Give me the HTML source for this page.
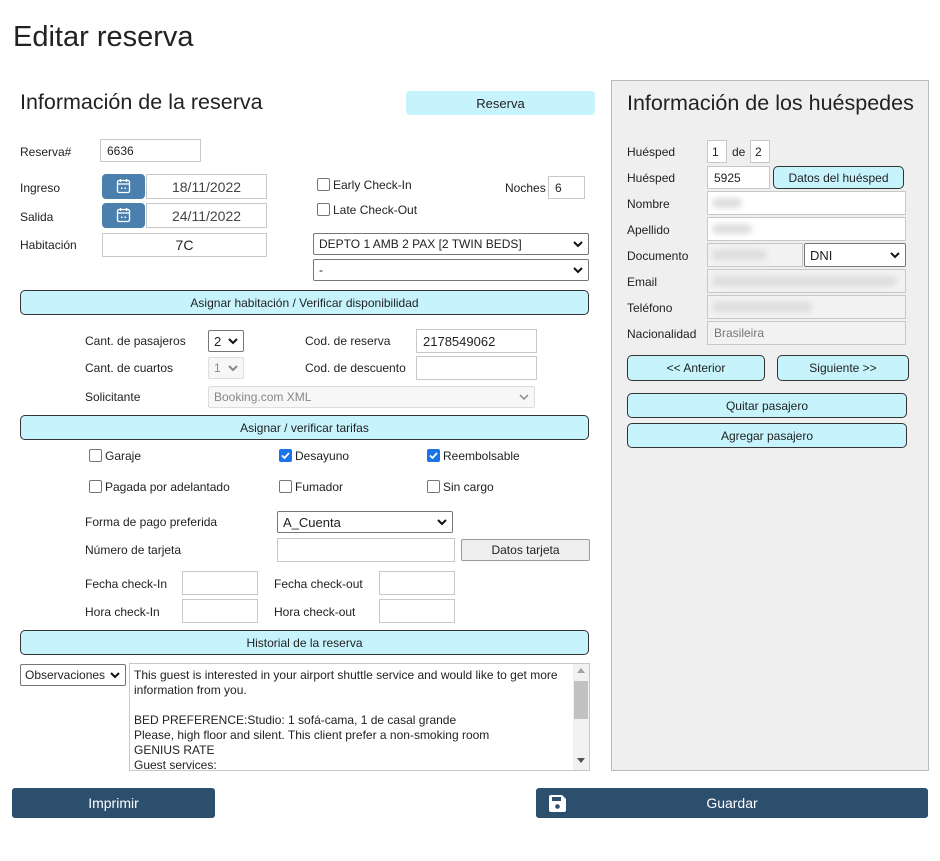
<!DOCTYPE html>
<html><head><meta charset="utf-8">
<style>
*{box-sizing:border-box;margin:0;padding:0}
body{width:940px;height:861px;background:#fff;font-family:"Liberation Sans",Arial,sans-serif;font-size:12px;color:#222;position:relative;overflow:hidden}
.a{position:absolute}
.lbl{position:absolute;font-size:12px;color:#222}
.inp{position:absolute;border:1px solid #c8c8c8;background:#fff;font-size:12px;padding:0 6px;display:flex;align-items:center}
.dis{background:#f2f2f2;color:#777}
.sel{position:absolute;border:1px solid #777;border-radius:2px;background:#fff;font-size:12px;padding:0 5px;display:flex;align-items:center}
.sel svg{position:absolute;right:5px;top:50%;margin-top:-4px}
.bar{position:absolute;background:#c6f3fc;border:1px solid #333;border-radius:5px;font-size:12px;display:flex;align-items:center;justify-content:center;color:#222}
.cb{position:absolute;width:13px;height:13px;border:1px solid #767676;border-radius:2px;background:#fff}
.cbk{position:absolute;width:13px;height:13px;border-radius:2px;background:#1a73e8}
.dark{position:absolute;background:#2c4f6e;color:#fff;border-radius:3px;font-size:14px;display:flex;align-items:center;justify-content:center}
.cal{position:absolute;width:43px;height:25px;background:#4a7fae;border-radius:4px}
.blur{position:absolute;height:10px;background:#ddd;border-radius:5px;filter:blur(3px)}
</style></head><body>
<div class="a" style="left:13px;top:21px;font-size:29px;color:#222">Editar reserva</div>

<div class="a" style="left:20px;top:90px;font-size:21.5px;color:#222">Información de la reserva</div>
<div class="a" style="left:406px;top:91px;width:189px;height:24px;background:#c6f3fc;border-radius:4px;display:flex;align-items:center;justify-content:center;font-size:13px">Reserva</div>

<div class="lbl" style="left:20px;top:145px">Reserva#</div>
<div class="inp" style="left:100px;top:139px;width:101px;height:23px">6636</div>

<div class="lbl" style="left:20px;top:181px">Ingreso</div>
<div class="cal" style="left:102px;top:174px"><svg width="43" height="25"><rect x="15.5" y="6.5" width="12" height="12" rx="1.5" fill="none" stroke="#fff" stroke-width="1.3"/><line x1="15.5" y1="10" x2="27.5" y2="10" stroke="#fff" stroke-width="1.3"/><line x1="18.5" y1="5" x2="18.5" y2="8" stroke="#fff" stroke-width="1.3"/><line x1="24.5" y1="5" x2="24.5" y2="8" stroke="#fff" stroke-width="1.3"/><rect x="19" y="13.5" width="1.5" height="1.5" fill="#fff"/><rect x="22.5" y="13.5" width="1.5" height="1.5" fill="#fff"/></svg></div>
<div class="inp" style="left:146px;top:174px;width:121px;height:25px;justify-content:center;font-size:14px;color:#444">18/11/2022</div>
<div class="lbl" style="left:20px;top:210px">Salida</div>
<div class="cal" style="left:102px;top:203px"><svg width="43" height="25"><rect x="15.5" y="6.5" width="12" height="12" rx="1.5" fill="none" stroke="#fff" stroke-width="1.3"/><line x1="15.5" y1="10" x2="27.5" y2="10" stroke="#fff" stroke-width="1.3"/><line x1="18.5" y1="5" x2="18.5" y2="8" stroke="#fff" stroke-width="1.3"/><line x1="24.5" y1="5" x2="24.5" y2="8" stroke="#fff" stroke-width="1.3"/><rect x="19" y="13.5" width="1.5" height="1.5" fill="#fff"/><rect x="22.5" y="13.5" width="1.5" height="1.5" fill="#fff"/></svg></div>
<div class="inp" style="left:146px;top:203px;width:121px;height:25px;justify-content:center;font-size:14px;color:#444">24/11/2022</div>
<div class="lbl" style="left:20px;top:238px">Habitación</div>
<div class="inp" style="left:102px;top:233px;width:165px;height:24px;justify-content:center;font-size:14px">7C</div>

<div class="cb" style="left:317px;top:178px"></div><div class="lbl" style="left:333px;top:178px">Early Check-In</div>
<div class="cb" style="left:317px;top:203px"></div><div class="lbl" style="left:333px;top:203px">Late Check-Out</div>
<div class="lbl" style="left:505px;top:181px">Noches</div>
<div class="inp" style="left:548px;top:176px;width:37px;height:23px">6</div>

<div class="sel" style="left:313px;top:233px;width:276px;height:22px">DEPTO 1 AMB 2 PAX [2 TWIN BEDS]<svg width="10" height="8"><path d="M1 2l4 4 4-4" fill="none" stroke="#111" stroke-width="2"/></svg></div>
<div class="sel" style="left:313px;top:259px;width:276px;height:22px">-<svg width="10" height="8"><path d="M1 2l4 4 4-4" fill="none" stroke="#111" stroke-width="2"/></svg></div>

<div class="bar" style="left:20px;top:290px;width:569px;height:25px">Asignar habitación / Verificar disponibilidad</div>

<div class="lbl" style="left:85px;top:334px">Cant. de pasajeros</div>
<div class="sel" style="left:208px;top:330px;width:36px;height:22px;font-size:13px">2<svg width="10" height="8"><path d="M1 2l4 4 4-4" fill="none" stroke="#111" stroke-width="2"/></svg></div>
<div class="lbl" style="left:305px;top:334px">Cod. de reserva</div>
<div class="inp" style="left:416px;top:329px;width:121px;height:24px;font-size:13px">2178549062</div>
<div class="lbl" style="left:85px;top:361px">Cant. de cuartos</div>
<div class="sel" style="left:208px;top:357px;width:36px;height:22px;border-color:#ddd;color:#888;background:#f7f7f7">1<svg width="10" height="8"><path d="M1 2l4 4 4-4" fill="none" stroke="#888" stroke-width="2"/></svg></div>
<div class="lbl" style="left:305px;top:361px">Cod. de descuento</div>
<div class="inp" style="left:416px;top:356px;width:121px;height:24px"></div>
<div class="lbl" style="left:85px;top:390px">Solicitante</div>
<div class="sel" style="left:208px;top:386px;width:327px;height:22px;border-color:#ddd;color:#888;background:#f7f7f7">Booking.com XML<svg width="10" height="8"><path d="M1 2l4 4 4-4" fill="none" stroke="#888" stroke-width="1.5"/></svg></div>

<div class="bar" style="left:20px;top:415px;width:569px;height:25px">Asignar / verificar tarifas</div>

<div class="cb" style="left:89px;top:449px"></div><div class="lbl" style="left:105px;top:449px">Garaje</div>
<div class="cbk" style="left:279px;top:449px"><svg width="13" height="13"><path d="M3 6.5l2.5 2.5 4.5-5" fill="none" stroke="#fff" stroke-width="1.8"/></svg></div><div class="lbl" style="left:295px;top:449px">Desayuno</div>
<div class="cbk" style="left:427px;top:449px"><svg width="13" height="13"><path d="M3 6.5l2.5 2.5 4.5-5" fill="none" stroke="#fff" stroke-width="1.8"/></svg></div><div class="lbl" style="left:443px;top:449px">Reembolsable</div>
<div class="cb" style="left:89px;top:480px"></div><div class="lbl" style="left:105px;top:480px">Pagada por adelantado</div>
<div class="cb" style="left:279px;top:480px"></div><div class="lbl" style="left:295px;top:480px">Fumador</div>
<div class="cb" style="left:427px;top:480px"></div><div class="lbl" style="left:443px;top:480px">Sin cargo</div>

<div class="lbl" style="left:85px;top:515px">Forma de pago preferida</div>
<div class="sel" style="left:277px;top:511px;width:176px;height:22px;font-size:13px">A_Cuenta<svg width="10" height="8"><path d="M1 2l4 4 4-4" fill="none" stroke="#111" stroke-width="2"/></svg></div>
<div class="lbl" style="left:85px;top:543px">Número de tarjeta</div>
<div class="inp" style="left:277px;top:538px;width:178px;height:24px"></div>
<div class="a" style="left:461px;top:539px;width:129px;height:22px;border:1px solid #999;border-radius:2px;background:#eee;display:flex;align-items:center;justify-content:center;font-size:12px">Datos tarjeta</div>

<div class="lbl" style="left:85px;top:577px">Fecha check-In</div>
<div class="inp" style="left:182px;top:571px;width:76px;height:24px"></div>
<div class="lbl" style="left:274px;top:577px">Fecha check-out</div>
<div class="inp" style="left:379px;top:571px;width:76px;height:24px"></div>
<div class="lbl" style="left:85px;top:605px">Hora check-In</div>
<div class="inp" style="left:182px;top:599px;width:76px;height:24px"></div>
<div class="lbl" style="left:274px;top:605px">Hora check-out</div>
<div class="inp" style="left:379px;top:599px;width:76px;height:24px"></div>

<div class="bar" style="left:20px;top:630px;width:569px;height:25px">Historial de la reserva</div>

<div class="sel" style="left:20px;top:664px;width:106px;height:22px;padding:0 4px">Observaciones<svg width="10" height="8"><path d="M1 2l4 4 4-4" fill="none" stroke="#111" stroke-width="2"/></svg></div>
<div class="a" style="left:129px;top:663px;width:461px;height:108px;border:1px solid #c8c8c8;overflow:hidden;font-size:12px;line-height:15px;padding:4px 20px 0 4px">This guest is interested in your airport shuttle service and would like to get more information from you.<br><br>BED PREFERENCE:Studio: 1 sofá-cama, 1 de casal grande<br>Please, high floor and silent. This client prefer a non-smoking room<br>GENIUS RATE<br>Guest services:</div>
<div class="a" style="left:573px;top:664px;width:16px;height:106px;background:#f1f1f1"></div>
<div class="a" style="left:574px;top:681px;width:14px;height:38px;background:#c1c1c1"></div>
<div class="a" style="left:577px;top:668px;width:0;height:0;border-left:4px solid transparent;border-right:4px solid transparent;border-bottom:5px solid #a3a3a3"></div>
<div class="a" style="left:577px;top:758px;width:0;height:0;border-left:4px solid transparent;border-right:4px solid transparent;border-top:5px solid #505050"></div>

<!-- right panel -->
<div class="a" style="left:611px;top:80px;width:318px;height:691px;background:#efefef;border:1px solid #bbb"></div>
<div class="a" style="left:627px;top:91px;font-size:21.5px;color:#222">Información de los huéspedes</div>
<div class="lbl" style="left:627px;top:145px">Huésped</div>
<div class="inp" style="left:707px;top:140px;width:20px;height:23px;padding:0 4px">1</div>
<div class="lbl" style="left:732px;top:145px">de</div>
<div class="inp" style="left:750px;top:140px;width:20px;height:23px;padding:0 4px">2</div>
<div class="lbl" style="left:627px;top:171px">Huésped</div>
<div class="inp" style="left:707px;top:166px;width:63px;height:23px">5925</div>
<div class="bar" style="left:773px;top:166px;width:131px;height:23px">Datos del huésped</div>
<div class="lbl" style="left:627px;top:197px">Nombre</div>
<div class="inp" style="left:707px;top:191px;width:199px;height:24px"></div><div class="blur" style="left:712px;top:198px;width:30px"></div>
<div class="lbl" style="left:627px;top:223px">Apellido</div>
<div class="inp" style="left:707px;top:217px;width:199px;height:24px"></div><div class="blur" style="left:712px;top:224px;width:40px"></div>
<div class="lbl" style="left:627px;top:249px">Documento</div>
<div class="inp dis" style="left:707px;top:243px;width:96px;height:24px"></div><div class="blur" style="left:712px;top:250px;width:55px"></div>
<div class="sel" style="left:804px;top:243px;width:102px;height:24px;font-size:13px">DNI<svg width="10" height="8"><path d="M1 2l4 4 4-4" fill="none" stroke="#111" stroke-width="2"/></svg></div>
<div class="lbl" style="left:627px;top:275px">Email</div>
<div class="inp dis" style="left:707px;top:269px;width:199px;height:24px"></div><div class="blur" style="left:712px;top:276px;width:185px"></div>
<div class="lbl" style="left:627px;top:301px">Teléfono</div>
<div class="inp dis" style="left:707px;top:295px;width:199px;height:24px"></div><div class="blur" style="left:712px;top:302px;width:100px"></div>
<div class="lbl" style="left:627px;top:327px">Nacionalidad</div>
<div class="inp dis" style="left:707px;top:321px;width:199px;height:24px">Brasileira</div>
<div class="bar" style="left:627px;top:355px;width:138px;height:26px">&lt;&lt; Anterior</div>
<div class="bar" style="left:777px;top:355px;width:132px;height:26px">Siguiente &gt;&gt;</div>
<div class="bar" style="left:627px;top:393px;width:280px;height:25px">Quitar pasajero</div>
<div class="bar" style="left:627px;top:423px;width:280px;height:25px">Agregar pasajero</div>

<div class="dark" style="left:12px;top:788px;width:203px;height:30px">Imprimir</div>
<div class="dark" style="left:536px;top:788px;width:392px;height:30px">Guardar
<svg class="a" style="left:12px;top:6px" width="19" height="19" viewBox="0 0 19 19"><path d="M1 3a2 2 0 0 1 2-2h11l4 4v11a2 2 0 0 1-2 2H3a2 2 0 0 1-2-2z" fill="#fff"/><rect x="4" y="3" width="9" height="4" fill="#2c4f6e"/><circle cx="9.5" cy="12.5" r="2.3" fill="#2c4f6e"/></svg></div>
</body></html>
